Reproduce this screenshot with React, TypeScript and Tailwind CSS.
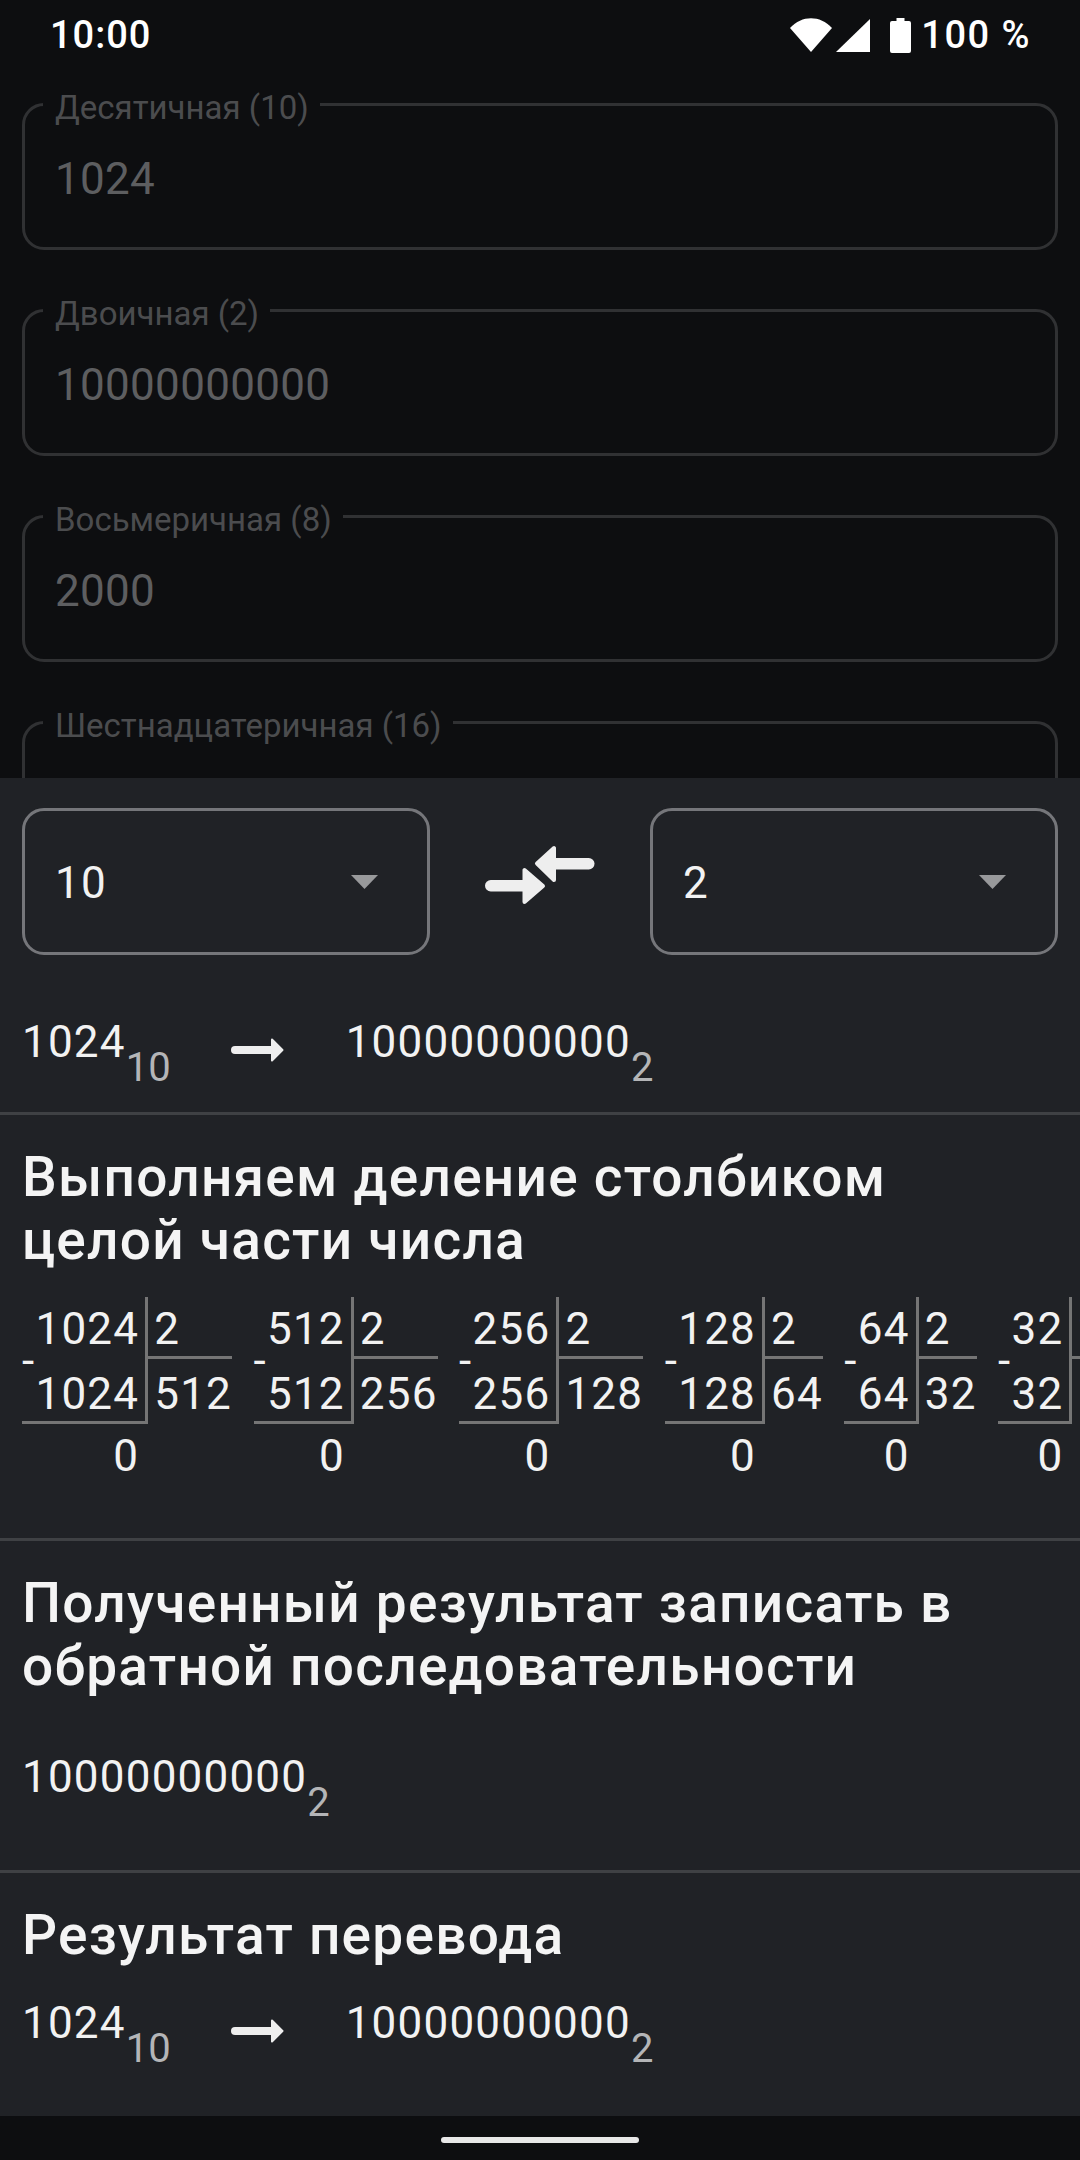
import type { ReactNode } from 'react';

const font = { fontFamily: 'Roboto, sans-serif' };

function Field({ label, value, cut }: { label: string; value?: string; cut?: boolean }) {
  return (
    <div className={`relative mx-[22px] h-[147px] shrink-0 rounded-[22px] border-[3px] border-[#303133] ${cut ? '' : 'mb-[59px]'}`}>
      <div className="absolute left-[18px] top-[-18px] bg-[#0d0e10] pl-[12px] pr-[11px] text-[33px] leading-[40px] text-[#4b4c4e]">{label}</div>
      {value && <div className="absolute left-[30px] top-[47px] text-[44px] leading-[52px] tracking-[0.3px] text-[#5d5e60]">{value}</div>}
    </div>
  );
}

function Select({ value }: { value: string }) {
  return (
    <div className="flex h-[147px] w-[408px] items-center justify-between rounded-[22px] border-[3px] border-[#75767a] pl-[30px] pr-[49px]">
      <span className="pt-[3px] text-[44px] leading-[52px] tracking-[1.2px] text-[#f2f2f2]">{value}</span>
      <svg width="27" height="14" viewBox="0 0 27 14" className="mt-[1px]"><path d="M0 0h27L13.500 14z" fill="#98999b" /></svg>
    </div>
  );
}

function SmallArrow() {
  return (
    <svg width="53" height="24" viewBox="0 0 53 24" className="block shrink-0">
      <rect x="0" y="8" width="44" height="8" rx="4" fill="#eeeeee" />
      <path d="M41 1.500L51.500 12L41 22.500z" fill="#eeeeee" stroke="#eeeeee" strokeWidth="2" strokeLinejoin="round" />
    </svg>
  );
}

function Num({ value, base }: { value: string; base: string }) {
  return (
    <>
      <span className="text-[44px] leading-[52px] tracking-[1.2px]">{value}</span>
      <span className="mt-[28px] text-[40px] leading-[48px] text-[#b4b5b7]">{base}</span>
    </>
  );
}

function Conversion() {
  return (
    <div className="flex items-start text-[#f2f2f2]">
      <Num value="1024" base="10" />
      <span className="ml-[60px] mr-[62px] mt-[22px]"><SmallArrow /></span>
      <Num value="10000000000" base="2" />
    </div>
  );
}

function Heading({ children }: { children: ReactNode }) {
  return <h2 className="text-[55px] leading-[63px] font-medium tracking-[1.25px] text-[#f4f4f4]">{children}</h2>;
}

function Division({ a, q }: { a: string; q: string }) {
  return (
    <div className="grid shrink-0 grid-cols-[auto_auto] text-[44px] leading-[52px] tracking-[1.2px] text-[#f2f2f2]">
      <div className="flex border-r-[3px] border-b-[3px] border-[#757575]">
        <span className="mt-[38px] h-[52px] w-[13.5px] shrink-0">-</span>
        <div className="flex-1 pr-[6px] text-right">
          <div className="h-[62px] pt-[6px]">{a}</div>
          <div className="h-[62px] pt-[9px]">{a}</div>
        </div>
      </div>
      <div>
        <div className="h-[62px] border-b-[3px] border-[#757575] pl-[6px] pt-[6px]">2</div>
        <div className="pl-[6px] pt-[9px]">{q}</div>
      </div>
      <div className="pr-[9px] pt-[6px] text-right">0</div>
    </div>
  );
}

export default function App() {
  const steps = [
    { a: '1024', q: '512' },
    { a: '512', q: '256' },
    { a: '256', q: '128' },
    { a: '128', q: '64' },
    { a: '64', q: '32' },
    { a: '32', q: '16' },
  ];
  return (
    <div className="flex h-[2160px] w-[1080px] flex-col overflow-hidden bg-[#0d0e10]" style={font}>
      <div className="h-[778px] shrink-0 overflow-hidden">
        <div className="flex h-[70px] items-center justify-between pl-[50px] pr-[49px]">
          <span className="text-[38px] font-medium leading-[44px] tracking-[1px] text-white">10:00</span>
          <div className="flex items-center text-[38px] font-medium leading-[44px] tracking-[1.5px] text-white">
            <svg width="42" height="34" viewBox="0 0 42 34" className="mr-[4px]"><path d="M0 10C12-3 30-3 42 10L21 34z" fill="#fff" /></svg>
            <svg width="34" height="33" viewBox="0 0 34 33" className="mr-[20px]"><path d="M34 0v33H0z" fill="#fff" /></svg>
            <svg width="21" height="35" viewBox="0 0 21 35" className="mr-[10px]"><path d="M6.500 0h8v3H19a2 2 0 0 1 2 2v28a2 2 0 0 1-2 2H2a2 2 0 0 1-2-2V5a2 2 0 0 1 2-2h4.500z" fill="#fff" /></svg>
            <span>100 %</span>
          </div>
        </div>
        <div className="pt-[33px]">
          <Field label="Десятичная (10)" value="1024" />
          <Field label="Двоичная (2)" value="10000000000" />
          <Field label="Восьмеричная (8)" value="2000" />
          <Field label="Шестнадцатеричная (16)" cut />
        </div>
      </div>

      <div className="flex-1 bg-[#202226]">
        <div className="h-[334px] px-[22px] pt-[30px]">
          <div className="flex items-center justify-between">
            <Select value="10" />
            <svg width="110" height="60" viewBox="0 0 110 60" className="mb-[14px] shrink-0">
              <rect x="65" y="13" width="44.500" height="11.500" rx="5.750" fill="#eeeeee" />
              <path d="M52 18.500L69 3V35z" fill="#eeeeee" stroke="#eeeeee" strokeWidth="4" strokeLinejoin="round" />
              <rect x="0" y="35" width="44" height="11.500" rx="5.750" fill="#eeeeee" />
              <path d="M58 41L39.500 25V57z" fill="#eeeeee" stroke="#eeeeee" strokeWidth="4" strokeLinejoin="round" />
            </svg>
            <Select value="2" />
          </div>
          <div className="mt-[61px]"><Conversion /></div>
        </div>
        <div className="h-[426px] border-t-[3px] border-[#3f4144] pt-[31px]">
          <div className="px-[22px]"><Heading>Выполняем деление столбиком<br />целой части числа</Heading></div>
          <div className="mt-[25px] flex gap-[21.5px] overflow-hidden pl-[22px]">
            {steps.map((s) => <Division key={s.a} {...s} />)}
          </div>
        </div>
        <div className="h-[332px] border-t-[3px] border-[#3f4144] px-[22px] pt-[31px]">
          <Heading>Полученный результат записать в<br />обратной последовательности</Heading>
          <div className="mt-[53px] flex items-start text-[#f2f2f2]">
            <Num value="10000000000" base="2" />
          </div>
        </div>
        <div className="border-t-[3px] border-[#3f4144] px-[22px] pt-[31px]">
          <Heading>Результат перевода</Heading>
          <div className="mt-[30px]"><Conversion /></div>
        </div>
      </div>

      <div className="flex h-[44px] shrink-0 items-end justify-center bg-[#0d0e10] pb-[17px]">
        <div className="h-[6px] w-[198px] rounded-full bg-[#e8e8e8]" />
      </div>
    </div>
  );
}
